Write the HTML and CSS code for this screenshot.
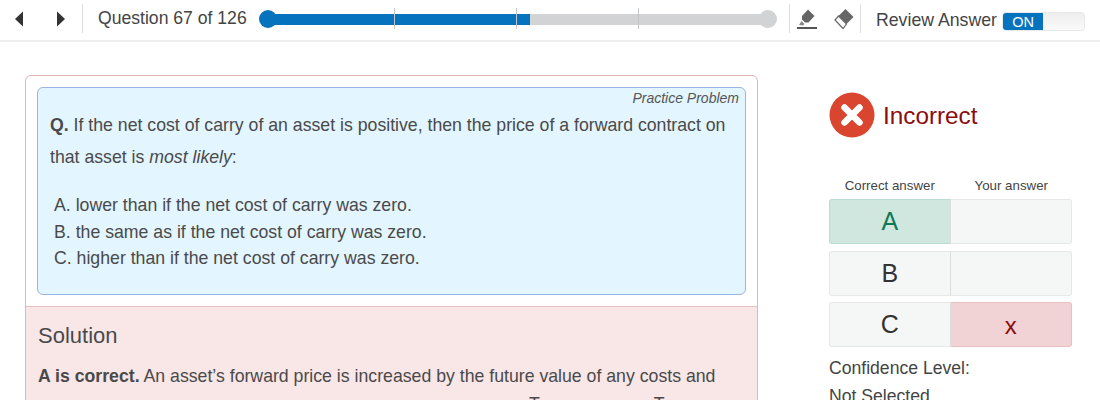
FILE: index.html
```html
<!DOCTYPE html>
<html lang="en">
<head>
<meta charset="utf-8">
<title>Question 67 of 126</title>
<link rel="stylesheet" href="styles.css">
</head>
<body>
<header class="topbar">
  <div class="nav">
    <svg class="arrow" width="12" height="16" viewBox="0 0 12 16"><path d="M10 0.500v15L2 8z"/></svg>
    <svg class="arrow" width="12" height="16" viewBox="0 0 12 16"><path d="M2 0.500v15l8-7.500z"/></svg>
  </div>
  <div class="qcount">Question 67 of 126</div>
  <div class="progress">
    <div class="track"><div class="fill"></div></div>
    <i class="thumb thumb-start"></i>
    <i class="thumb thumb-end"></i>
    <i class="tick t1"></i><i class="tick t2"></i><i class="tick t3"></i>
  </div>
  <div class="tools">
    <svg width="24" height="24" viewBox="0 0 24 24"><path fill="#666" d="M13 2.500l6.500 6.500-6 6.500H10l-3-3V9z"/><path fill="#888" d="M6.500 14l3 3-1.500 1.500L4 18z"/><rect x="2" y="20" width="20" height="2" fill="#555"/></svg>
    <svg width="24" height="24" viewBox="0 0 24 24"><path fill="#666" d="M13.500 2l8 8-7 7L6.500 9z"/><path fill="#fff" stroke="#666" stroke-width="1.200" d="M6.500 9l8 8-3.500 4.500L3 13z"/></svg>
  </div>
  <div class="review">Review Answer</div>
  <div class="toggle"><span class="toggle-on">ON</span></div>
</header>
<main class="page">
  <section class="card">
    <div class="question">
      <div class="tag">Practice Problem</div>
      <p class="stem"><b>Q.</b> If the net cost of carry of an asset is positive, then the price of a forward contract on that asset is <em>most likely</em>:</p>
      <ul class="options">
        <li>A. lower than if the net cost of carry was zero.</li>
        <li>B. the same as if the net cost of carry was zero.</li>
        <li>C. higher than if the net cost of carry was zero.</li>
      </ul>
    </div>
    <div class="solution">
      <h2>Solution</h2>
      <p><b>A is correct.</b> An asset’s forward price is increased by the future value of any costs and</p>
      <p class="formula"><span>T</span><span>T</span></p>
    </div>
  </section>
  <aside class="result">
    <div class="verdict">
      <svg width="46" height="46" viewBox="0 0 46 46"><circle cx="23" cy="23" r="22.500" fill="#d9452f"/><path d="M15.500 15.500l15 15m0-15l-15 15" stroke="#fff" stroke-width="6.500" stroke-linecap="round"/></svg>
      <span>Incorrect</span>
    </div>
    <div class="heads"><span>Correct answer</span><span>Your answer</span></div>
    <div class="row"><div class="cell good">A</div><div class="cell"></div></div>
    <div class="row"><div class="cell">B</div><div class="cell"></div></div>
    <div class="row"><div class="cell">C</div><div class="cell bad"><span>x</span></div></div>
    <p class="conf">Confidence Level:</p>
    <p class="conf">Not Selected</p>
  </aside>
</main>
</body>
</html>
```
FILE: styles.css
```css
* { box-sizing: border-box; }
html, body { margin: 0; height: 400px; overflow: hidden; background: #fff; }
body { font-family: "Liberation Sans", Arial, sans-serif; color: #4a4a4a; }

.topbar { display: flex; align-items: center; height: 42px; padding-bottom: 3px; border-bottom: 2px solid #eee; }
.nav { display: flex; gap: 30px; width: 83px; height: 29px; padding-left: 13px; align-items: center; border-right: 1px solid #ddd; }
.arrow { fill: #333; }
.qcount { margin-left: 15px; width: 161px; font-size: 17.600px; color: #444; }
.progress { position: relative; width: 518px; height: 22px; }
.track { position: absolute; left: 7px; right: 9px; top: 6px; height: 11px; background: #d1d3d4; }
.fill { width: 264px; height: 100%; background: #0573bd; }
.thumb { position: absolute; top: 2px; width: 18px; height: 18px; border-radius: 50%; }
.thumb-start { left: 0; background: #0573bd; }
.thumb-end { right: 0; background: #d1d3d4; }
.tick { position: absolute; top: 0; width: 1px; height: 21px; background: #c4c6c8; }
.t1 { left: 135px; }
.t2 { left: 257px; }
.t3 { left: 379px; }
.tools { display: flex; gap: 13px; align-items: center; margin-left: 12px; width: 72px; height: 29px; padding-left: 5px; border-left: 1px solid #ddd; border-right: 1px solid #ddd; }
.review { margin: 4px 0 0 15px; font-size: 17.700px; color: #444; width: 126px; white-space: nowrap; }
.toggle { width: 83px; height: 19px; margin-top: 6px; background: linear-gradient(#eee, #fafafa); border: 1px solid #e8e8e8; border-radius: 4px; overflow: hidden; }
.toggle-on { display: block; width: 40px; height: 100%; background: #0573bd; color: #fff; font-size: 14.500px; line-height: 18px; text-align: center; }

.page { display: flex; padding: 33px 0 0 25px; align-items: flex-start; }
.card { width: 733px; height: 340px; border: 1px solid #e5b5b5; border-radius: 6px 6px 0 0; flex: none; }
.question { height: 208px; margin: 11px; padding: 2px 6px 0 11px; background: #e3f5fe; border: 1px solid #9ab3e2; border-radius: 6px; font-size: 17.700px; }
.tag { text-align: right; font-style: italic; font-size: 14px; line-height: 16px; color: #555; }
.stem { margin: 3px 0 19px; padding-left: 1px; line-height: 32px; }
.options { list-style: none; margin: 0; padding: 0 0 0 5px; line-height: 26.500px; }
.solution { background: #f9e6e6; border-top: 1px solid #e5c2c2; height: 120px; padding: 17px 12px; font-size: 17.700px; }
.solution h2 { margin: 0 0 15px; font-size: 22px; line-height: 24px; font-weight: 400; }
.solution p { margin: 0; line-height: 26px; white-space: nowrap; }
.solution .formula { display: flex; gap: 114px; padding-left: 491px; margin-top: 2px; }

.result { width: 243px; margin-left: 71px; flex: none; }
.verdict { display: flex; align-items: center; gap: 8px; height: 46px; margin-top: 17px; color: #8c0d0d; font-size: 24.300px; }
.verdict span { margin-top: 2px; }
.heads { display: flex; margin-top: 39px; height: 22px; font-size: 13.300px; line-height: 18px; text-align: center; color: #444; }
.heads span { width: 50%; }
.row { display: flex; height: 45px; margin-bottom: 6.500px; font-size: 25px; color: #333; }
.cell { width: 50%; display: flex; align-items: center; justify-content: center; background: #f5f7f7; border: 1px solid #e6e8e8; }
.cell:first-child { border-radius: 3px 0 0 3px; border-right-color: #ddd; }
.cell:last-child { border-radius: 0 3px 3px 0; border-left: 0; }
.good { background: #cfe7df; border-color: #b9dccf; color: #0d7a55; }
.bad { background: #f1d3d5; border-color: #e6c0c3; color: #8c0d0d; }
.bad span { position: relative; top: 1px; font-size: 24px; }
.conf { margin: 0; font-size: 17.600px; line-height: 28px; color: #444; }
```
